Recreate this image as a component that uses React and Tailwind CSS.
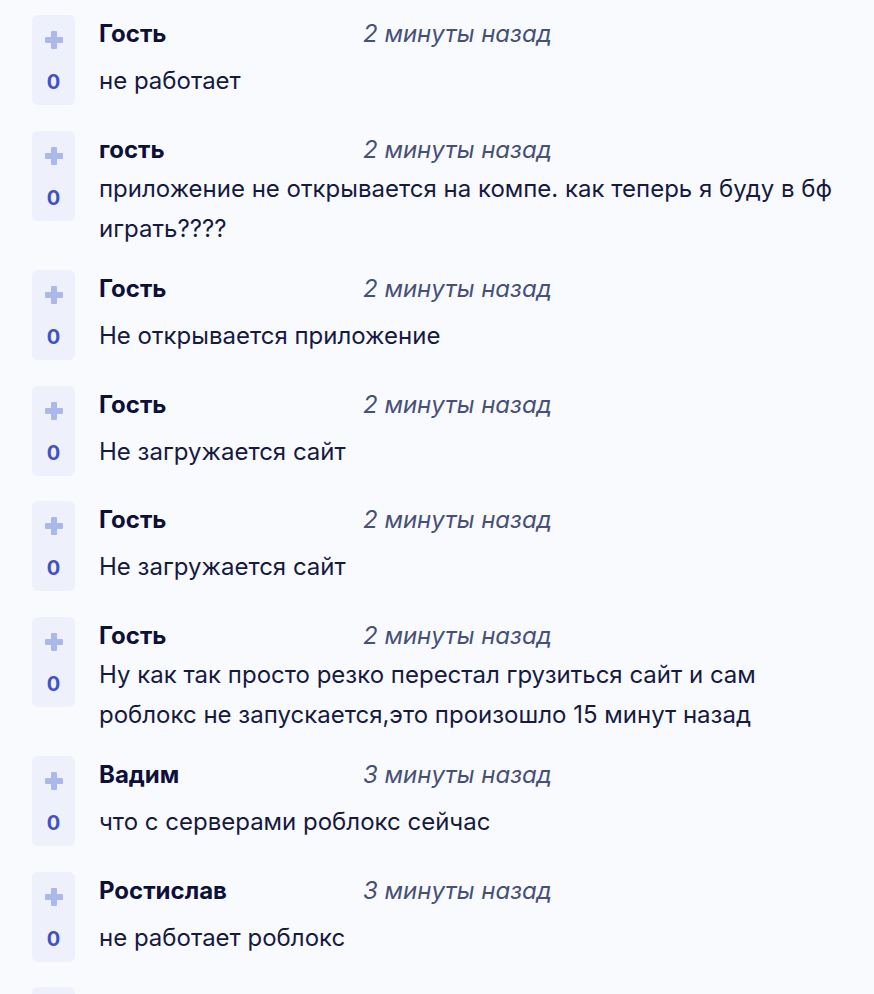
import React from 'react';

const comments = [
  { name: 'Гость', time: '2 минуты назад', text: 'не работает' },
  { name: 'гость', time: '2 минуты назад', text: 'приложение не открывается на компе. как теперь я буду в бф играть????' },
  { name: 'Гость', time: '2 минуты назад', text: 'Не открывается приложение' },
  { name: 'Гость', time: '2 минуты назад', text: 'Не загружается сайт' },
  { name: 'Гость', time: '2 минуты назад', text: 'Не загружается сайт' },
  { name: 'Гость', time: '2 минуты назад', text: 'Ну как так просто резко перестал грузиться сайт и сам роблокс не запускается,это произошло 15 минут назад' },
  { name: 'Вадим', time: '3 минуты назад', text: 'что с серверами роблокс сейчас' },
  { name: 'Ростислав', time: '3 минуты назад', text: 'не работает роблокс' },
];

function PlusIcon() {
  return (
    <svg width="18" height="18" viewBox="0 0 18 18" fill="#abb8ea">
      <rect x="6" y="0" width="6" height="18" rx="1" />
      <rect x="0" y="6" width="18" height="6" rx="1" />
    </svg>
  );
}

function VoteBox() {
  return (
    <div className="flex h-[90px] w-[43px] flex-col items-center rounded-md bg-[#eef1fb] pt-[16px]">
      <PlusIcon />
      <span className="mt-[21px] text-[20px] font-bold leading-6 text-[#4252c4]">0</span>
    </div>
  );
}

function Comment({ name, time, text }) {
  return (
    <div className="flex pb-[21.5px]">
      <div className="h-[94px] shrink-0">
        <VoteBox />
      </div>
      <div className="ml-[24px] flex min-h-[90px] flex-1 flex-col pr-[20px]">
        <div className="flex h-[38px] items-center">
          <span className="w-[264px] text-[24px] font-bold leading-[38px] text-[#0d1039]">{name}</span>
          <span className="text-[24px] italic leading-[38px] text-[#465079]">{time}</span>
        </div>
        <div className="flex flex-1 items-center">
          <p className="text-[24px] leading-[40px] text-[#161a42]">{text}</p>
        </div>
      </div>
    </div>
  );
}

export default function App() {
  return (
    <div className="h-[994px] overflow-hidden bg-[#f9fafd] pl-[32px] pt-[15px]" style={{ fontFamily: 'Inter, Roboto, sans-serif' }}>
      {comments.map((c, i) => (
        <Comment key={i} {...c} />
      ))}
      <div className="h-[90px] w-[43px] rounded-md bg-[#eef1fb]" />
    </div>
  );
}
